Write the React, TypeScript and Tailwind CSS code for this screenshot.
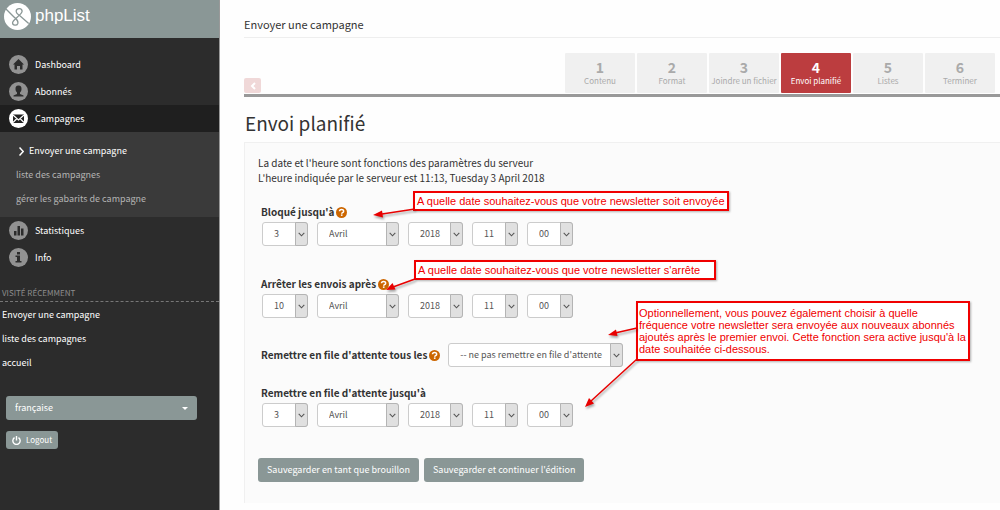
import type { ReactNode } from 'react';

type SelectSpec = { label: string; value: string; width: string };

function Field({ label, value, width }: SelectSpec) {
  return (
    <span className={`relative block h-6 ${width}`}>
      <select
        aria-label={label}
        defaultValue={value}
        className="block h-6 w-full appearance-none rounded-[3px] border border-[#ccc] bg-white pl-[11px] text-[9px] leading-4 text-[#555]"
      >
        <option>{value}</option>
      </select>
      <span className="pointer-events-none absolute inset-y-0 right-0 flex w-[13px] items-center justify-center rounded-r-[3px] border border-[#b4b4b4] bg-[#e0e0e0]">
        <svg viewBox="0 0 7 5" className="h-[5px] w-[7px]" fill="none" stroke="#555" strokeWidth="1.1">
          <path d="M.7 .8 3.5 3.8 6.3 .8" />
        </svg>
      </span>
    </span>
  );
}

function DateRow({ day, name }: { day: string; name: string }) {
  return (
    <div className="flex gap-[9px] pl-1">
      <Field label={`${name} jour`} value={day} width="w-[46px]" />
      <Field label={`${name} mois`} value="Avril" width="w-[82px]" />
      <Field label={`${name} année`} value="2018" width="w-[55px]" />
      <Field label={`${name} heure`} value="11" width="w-[46px]" />
      <Field label={`${name} minute`} value="00" width="w-[46px]" />
    </div>
  );
}

function Help() {
  return (
    <button type="button" aria-label="Aide" className="block">
      <svg viewBox="0 0 22 22" className="h-[11px] w-[11px]">
        <circle cx="11" cy="11" r="11" fill="#cc6600" />
        <path d="M7 8.6C7 3.6 15.3 3.8 15.3 8.3c0 3-3.8 2.8-3.8 5" fill="none" stroke="#fff" strokeWidth="3" />
        <rect x="9.8" y="14.8" width="3.2" height="3" fill="#fff" />
      </svg>
    </button>
  );
}

function Legend({ children, help }: { children: ReactNode; help?: boolean }) {
  return (
    <div className="flex h-4 items-center gap-[2px] pl-[3px] text-[10px] leading-4 font-bold text-[#333]">
      <span>{children}</span>
      {help && <Help />}
    </div>
  );
}

function NavItem({ label, icon, active }: { label: string; icon: ReactNode; active?: boolean }) {
  return (
    <a href="#" className={`flex h-[27px] items-center gap-[7px] pl-[9px] ${active ? 'bg-[#1f1f1f]' : ''}`}>
      <svg viewBox="0 0 38 38" className="h-[19px] w-[19px]">
        <circle cx="19" cy="19" r="19" fill={active ? '#fff' : '#929292'} />
        {icon}
      </svg>
      <span className="text-[9px] leading-4 text-white">{label}</span>
    </a>
  );
}

const steps = ['Contenu', 'Format', 'Joindre un fichier', 'Envoi planifié', 'Listes', 'Terminer'];

function Note({ className, children }: { className: string; children: ReactNode }) {
  return (
    <p
      className={`absolute border-2 border-[#f00000] bg-white font-['Liberation_Sans',Arial,sans-serif] text-[11px] leading-3 whitespace-nowrap text-[#f00000] shadow-[1px_1px_2px_rgba(0,0,0,0.3)] ${className}`}
    >
      {children}
    </p>
  );
}

export default function App() {
  return (
    <div className="flex min-h-screen bg-[#fefefe] font-['Noto_Sans_CJK_JP','Noto_Sans_CJK_SC',sans-serif] text-[#333]">
      <aside className="w-[220px] shrink-0 border-r border-[#999] bg-[#2c2c2c]">
        <header className="flex h-[38px] items-start gap-1 bg-[#8a9796] pt-[3px] pl-1">
          <svg viewBox="12 8 82 82" className="h-[27px] w-[27px]">
            <circle cx="53" cy="49" r="41" fill="#fff" />
            <path
              d="M18 26 40 48C52 60 56 62 54 70 51 78 38 77 38 68 38 58 66 44 67 33 67 23 51 22 49 32 48 40 56 44 62 48L87 70"
              fill="none"
              stroke="#8a9796"
              strokeWidth="4"
            />
          </svg>
          <span className="font-['Liberation_Sans',Arial,sans-serif] text-[17px] leading-[26px] text-white">phpList</span>
        </header>
        <nav className="pt-[13px]">
          <NavItem label="Dashboard" icon={<path d="M19 8 30 19h-3v10h-5v-7h-6v7h-5V19H8Z" fill="#2c2c2c" />} />
          <NavItem
            label="Abonnés"
            icon={<path d="M19 7c5 0 6 3 6 7 0 3-1 5-3 7v3l7 3v2H9v-2l7-3v-3c-2-2-3-4-3-7 0-4 1-7 6-7Z" fill="#2c2c2c" />}
          />
          <NavItem
            label="Campagnes"
            active
            icon={
              <g>
                <rect x="8" y="11" width="22" height="17" fill="#222" />
                <path d="M8 12 19 22 30 12M8 27l7.5-7.5M30 27l-7.5-7.5" fill="none" stroke="#fff" strokeWidth="2.2" />
              </g>
            }
          />
          <div className="flex flex-col bg-[#3a3a3a] pt-[7px] pb-[6px] pl-4 text-[9px] leading-6 text-[#b4b4b4]">
            <a href="#" className="flex items-center gap-[5px] pl-[3px] text-white">
              <svg viewBox="0 0 5 9" className="h-[9px] w-[5px]" fill="none" stroke="#fff" strokeWidth="1.5">
                <path d="M.5 .5 4.2 4.5 .5 8.5" />
              </svg>
              Envoyer une campagne
            </a>
            <a href="#">liste des campagnes</a>
            <a href="#">gérer les gabarits de campagne</a>
          </div>
          <NavItem
            label="Statistiques"
            icon={<path d="M10 20h5v9h-5zM17 10h5v19h-5zM24 15h5v14h-5z" fill="#2c2c2c" />}
          />
          <NavItem
            label="Info"
            icon={<path d="M16 8h6v5h-6zM13 15h9v11h3v3H13v-3h3v-8h-3z" fill="#2c2c2c" />}
          />
        </nav>
        <h2 className="mt-[13px] border-b border-dashed border-[#777] pl-[2px] text-[8px] leading-[17px] text-[#8c8c8c]">
          VISITÉ RÉCEMMENT
        </h2>
        <div className="flex flex-col pt-[1px] pl-[2px] text-[9px] leading-6 text-white">
          <a href="#">Envoyer une campagne</a>
          <a href="#">liste des campagnes</a>
          <a href="#">accueil</a>
        </div>
        <div className="relative mt-[21px] mr-[22px] ml-[6px]">
          <select
            aria-label="Langue"
            className="block h-6 w-full appearance-none rounded-[3px] bg-[#8a9796] pl-[9px] text-[9px] leading-4 text-white"
          >
            <option>française</option>
          </select>
          <svg viewBox="0 0 6 3" className="pointer-events-none absolute top-[11px] right-[9px] h-[3px] w-[6px]">
            <path d="M0 0h6L3 3z" fill="#fff" />
          </svg>
        </div>
        <button
          type="button"
          className="mt-[11px] ml-[6px] flex h-[18px] items-center gap-[5px] rounded-[3px] bg-[#8a9796] px-[6px] text-[8px] leading-3 text-white"
        >
          <svg viewBox="0 0 16 16" className="h-[9px] w-[9px]" fill="none" stroke="#fff" strokeWidth="2.5">
            <path d="M4.5 3A6.5 6.5 0 1 0 11.5 3M8 0v8" />
          </svg>
          Logout
        </button>
      </aside>

      <main className="min-w-0 flex-1 pl-6">
        <h1 className="mt-[14px] border-b border-[#eee] pb-[3px] text-[11px] leading-5">Envoyer une campagne</h1>
        <div className="mt-[15px] flex items-end justify-between border-b-[3px] border-[#999] pr-[5px]">
          <button
            type="button"
            aria-label="Précédent"
            className="mb-[1px] flex h-[15px] w-[17px] items-center justify-center rounded-[2px] bg-[#f0d8d8]"
          >
            <svg viewBox="0 0 6 8" className="h-2 w-[6px]" fill="none" stroke="#fff" strokeWidth="2">
              <path d="M5 1 2 4l3 3" />
            </svg>
          </button>
          <ol className="mb-[1px] flex gap-[2px]">
            {steps.map((s, i) => (
              <li
                key={s}
                className={`flex h-10 w-[70px] flex-col items-center rounded-[1px] pt-[5px] whitespace-nowrap ${
                  i === 3 ? 'bg-[#bc3d3f] text-white' : 'bg-[#f0f0f0] text-[#aaa]'
                }`}
              >
                <span className="text-[14px] leading-[18px] font-bold">{i + 1}</span>
                <span className="text-[8px] leading-[10px]">{s}</span>
              </li>
            ))}
          </ol>
        </div>
        <h2 className="mt-[11px] mb-1 pl-[1px] text-[19px] leading-[30px]">Envoi planifié</h2>

        <form className="relative border-t border-l border-[#f0f0f0] bg-[#fbfbfb] pt-3 pb-[21px] pl-[13px]">
          <p className="text-[10px] leading-[15px]">
            La date et l'heure sont fonctions des paramètres du serveur
            <br />
            L'heure indiquée par le serveur est 11:13, Tuesday 3 April 2018
          </p>
          <div className="mt-[19px] flex flex-col gap-[2px]">
            <Legend help>Bloqué jusqu'à</Legend>
            <DateRow day="3" name="Bloqué" />
          </div>
          <div className="mt-[30px] flex flex-col gap-[2px]">
            <Legend help>Arrêter les envois après</Legend>
            <DateRow day="10" name="Arrêter" />
          </div>
          <div className="mt-[25px] flex items-center gap-2">
            <Legend help>Remettre en file d'attente tous les</Legend>
            <Field label="Fréquence" value="-- ne pas remettre en file d'attente" width="w-[175px]" />
          </div>
          <div className="mt-[18px] flex flex-col gap-[2px]">
            <Legend>Remettre en file d'attente jusqu'à</Legend>
            <DateRow day="3" name="Remettre" />
          </div>
          <div className="mt-[31px] flex gap-[5px] text-[9px] leading-4 text-white">
            <button type="button" className="h-6 rounded-[3px] bg-[#8a9796] px-[9px]">
              Sauvegarder en tant que brouillon
            </button>
            <button type="button" className="h-6 rounded-[3px] bg-[#8a9796] px-[9px]">
              Sauvegarder et continuer l'édition
            </button>
          </div>

          <Note className="top-[48px] left-[168px] w-[316px] px-[2px] py-[2px]">
            A quelle date souhaitez-vous que votre newsletter soit envoyée
          </Note>
          <Note className="top-[117px] left-[169px] w-[302px] px-[2px] py-[2px]">
            A quelle date souhaitez-vous que votre newsletter s'arrête
          </Note>
          <Note className="top-[158px] left-[391px] w-[334px] px-[1px] py-1">
            Optionnellement, vous pouvez également choisir à quelle
            <br />
            fréquence votre newsletter sera envoyée aux nouveaux abonnés
            <br />
            ajoutés après le premier envoi. Cette fonction sera active jusqu'à la
            <br />
            date souhaitée ci-dessous.
          </Note>
          <svg
            viewBox="0 0 480 280"
            className="pointer-events-none absolute top-0 left-0 h-[280px] w-[480px] drop-shadow-[1px_2px_1px_rgba(0,0,0,0.35)]"
          >
            <g stroke="#e80000" strokeWidth="1.5" fill="#e80000">
              <path d="M170 66 137 71M170 136 148 144M392 185 370 190M392 216 346 258" />
              <path stroke="none" d="M128 72l9-4.5 1 7zM141 147l6.5-7 3 6.5zM363 192l8-5.5 1.5 6.5zM340 264l4-9 5 5.5z" />
            </g>
          </svg>
        </form>
      </main>
    </div>
  );
}
